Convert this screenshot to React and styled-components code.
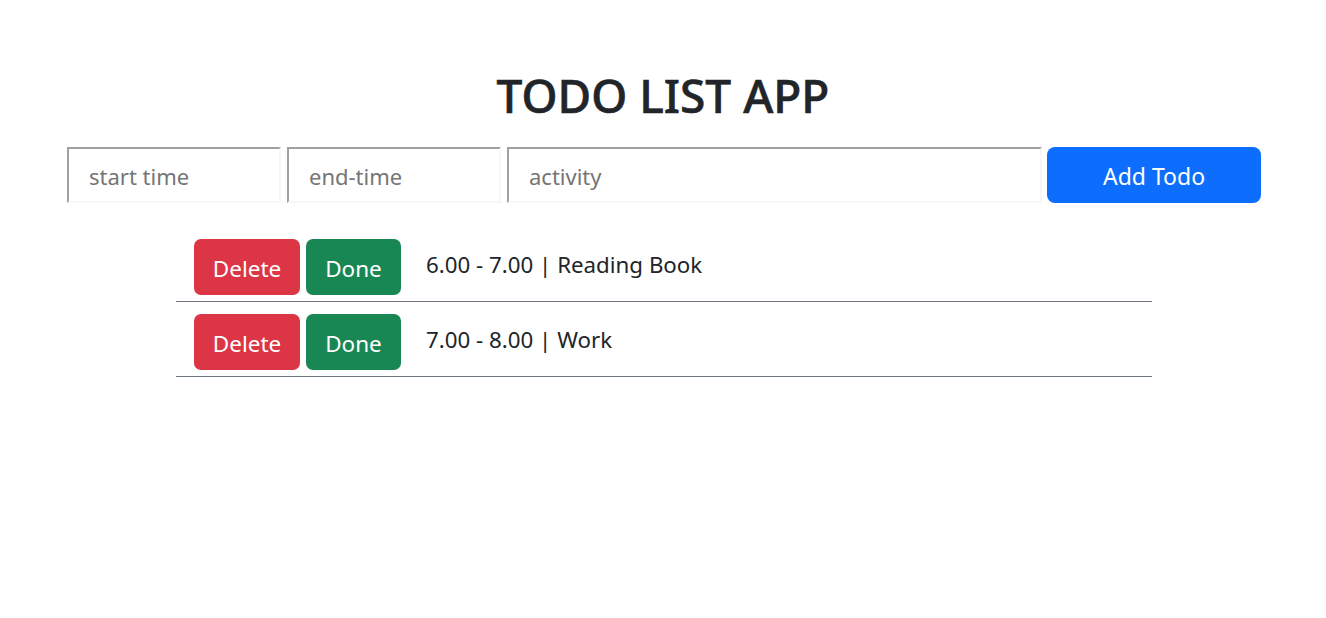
import React from "react";
import styled, { createGlobalStyle } from "styled-components";

const Global = createGlobalStyle`
  body {
    margin: 0;
    background: #fff;
    font-family: "Noto Sans", "Open Sans", sans-serif;
    color: #212529;
  }
`;

const Page = styled.div`
  display: flex;
  flex-direction: column;
  align-items: center;
  padding-top: 68px;
`;

const Title = styled.h1`
  margin: 0 0 24px;
  font-size: 46px;
  font-weight: 500;
  line-height: 1.2;
  color: #212529;
  -webkit-text-stroke: 0.6px #212529;
`;

const Form = styled.form`
  display: flex;
  gap: 6px;
  width: 1194px;
  margin-left: 2px;
`;

const Field = styled.input`
  box-sizing: border-box;
  width: ${(p) => p.$w}px;
  height: 56px;
  border-style: solid;
  border-width: 2px;
  border-color: #a0a0a0 #f7f7f7 #f7f7f7 #a0a0a0;
  padding: 2px 20px 0;
  font-family: inherit;
  font-size: 22px;
  color: #212529;
  outline: none;
  &::placeholder {
    color: #757575;
  }
`;

const AddButton = styled.button`
  box-sizing: border-box;
  width: 214px;
  height: 56px;
  margin-left: -1px;
  border: none;
  border-radius: 8px;
  background: #0d6efd;
  color: #fff;
  font-family: inherit;
  font-size: 23px;
  padding: 1px 0 0;
`;

const List = styled.ul`
  list-style: none;
  margin: 24px 0 0;
  padding: 0;
  width: 976px;
  margin-left: 2px;
`;

const Row = styled.li`
  display: flex;
  align-items: center;
  gap: 6px;
  padding: 12px 0 6px 18px;
  border-bottom: 1px solid #6c757d;
`;

const ActionButton = styled.button`
  box-sizing: border-box;
  width: ${(p) => p.$w}px;
  height: 56px;
  border: none;
  border-radius: 7px;
  background: ${(p) => p.$bg};
  color: #fff;
  font-family: inherit;
  font-size: 22.5px;
  padding: 3px 0 0;
`;

const Label = styled.span`
  margin-left: 19px;
  margin-top: -6px;
  font-size: 22.3px;
  color: #212529;
`;

const todos = [
  { start: "6.00", end: "7.00", activity: "Reading Book" },
  { start: "7.00", end: "8.00", activity: "Work" },
];

export default function App() {
  return (
    <>
      <Global />
      <Page>
        <Title>TODO LIST APP</Title>
        <Form onSubmit={(e) => e.preventDefault()}>
          <Field $w={214} placeholder="start time" />
          <Field $w={214} placeholder="end-time" />
          <Field $w={535} placeholder="activity" />
          <AddButton type="submit">Add Todo</AddButton>
        </Form>
        <List>
          {todos.map((t) => (
            <Row key={t.activity}>
              <ActionButton $w={106} $bg="#dc3545">Delete</ActionButton>
              <ActionButton $w={95} $bg="#198754">Done</ActionButton>
              <Label>
                {t.start} - {t.end} | {t.activity}
              </Label>
            </Row>
          ))}
        </List>
      </Page>
    </>
  );
}
